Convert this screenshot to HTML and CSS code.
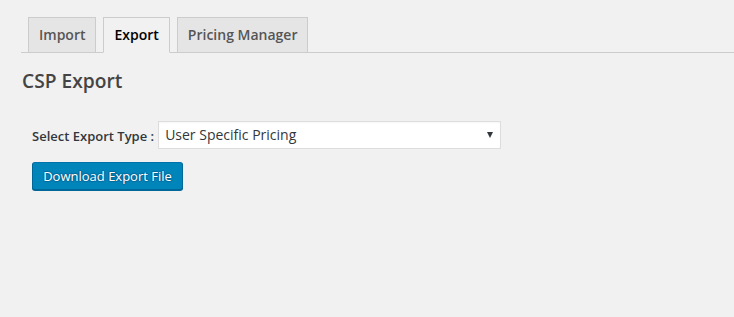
FILE: index.html
```html
<!DOCTYPE html>
<html lang="en">
<head>
<meta charset="utf-8">
<title>CSP Export</title>
<link rel="stylesheet" href="styles.css">
</head>
<body>
<div class="wrap">
  <nav class="tabs">
    <a class="tab" href="#">Import</a>
    <a class="tab tab-active" href="#">Export</a>
    <a class="tab" href="#">Pricing Manager</a>
  </nav>
  <h2 class="title">CSP Export</h2>
  <form class="export-form">
    <div class="field-row">
      <label class="field-label" for="export-type">Select Export Type :</label>
      <span class="select-wrap">
        <select id="export-type" class="select">
          <option>User Specific Pricing</option>
          <option>Role Specific Pricing</option>
          <option>Group Specific Pricing</option>
        </select>
      </span>
    </div>
    <button type="button" class="btn-primary">Download Export File</button>
  </form>
</div>
</body>
</html>
```

FILE: styles.css
```css
html, body {
  margin: 0;
  padding: 0;
  background: #f1f1f1;
  height: 100%;
}

body {
  font-family: "Open Sans", "Liberation Sans", sans-serif;
  color: #444;
  font-size: 13px;
}

.wrap {
  padding: 17px 0 0 21px;
}

.tabs {
  display: flex;
  gap: 7px;
  padding-left: 7px;
  border-bottom: 1px solid #ccc;
  height: 35px;
  align-items: flex-start;
}

.tab {
  display: block;
  box-sizing: border-box;
  height: 36px;
  padding: 5px 10px;
  font-size: 14px;
  line-height: 24px;
  font-weight: 600;
  color: #555;
  text-decoration: none;
  background: #e5e5e5;
  border: 1px solid #ccc;
  white-space: nowrap;
}

.tab-active {
  background: #f1f1f1;
  color: #000;
  border-bottom-color: #f1f1f1;
}

.title {
  margin: 15px 0 0 1px;
  font-size: 19.2px;
  line-height: 25px;
  font-weight: 600;
  color: #444;
}

.export-form {
  margin: 28px 0 0 11px;
}

.field-row {
  display: flex;
  align-items: center;
  gap: 4px;
  height: 28px;
}

.field-label {
  font-size: 13px;
  font-weight: 600;
  color: #32373c;
  padding-top: 1px;
}

.select-wrap {
  position: relative;
  display: block;
}

.select-wrap::after {
  content: "";
  position: absolute;
  right: 8px;
  top: 11px;
  border-left: 3.5px solid transparent;
  border-right: 3.5px solid transparent;
  border-top: 6px solid #32373c;
  pointer-events: none;
}

.select {
  -webkit-appearance: none;
  appearance: none;
  display: block;
  box-sizing: border-box;
  width: 343px;
  height: 28px;
  margin: 0;
  padding: 0 24px 0 6px;
  font-family: "Open Sans", "Liberation Sans", sans-serif;
  font-size: 14px;
  line-height: 26px;
  color: #32373c;
  background: #fff;
  border: 1px solid #ddd;
  border-radius: 0;
  box-shadow: inset 0 1px 2px rgba(0, 0, 0, 0.04);
  outline: none;
}

.btn-primary {
  display: block;
  box-sizing: border-box;
  margin-top: 13px;
  height: 28px;
  width: 151px;
  padding: 0 10px 1px;
  font-family: "Open Sans", "Liberation Sans", sans-serif;
  font-size: 13px;
  line-height: 26px;
  color: #fff;
  background: #0085ba;
  border: 1px solid #0073aa;
  border-color: #0073aa #006799 #006799;
  border-radius: 3px;
  box-shadow: 0 1px 0 #006799;
  text-shadow: 0 -1px 1px #006799, 1px 0 1px #006799, 0 1px 1px #006799, -1px 0 1px #006799;
  cursor: pointer;
  white-space: nowrap;
}
```
